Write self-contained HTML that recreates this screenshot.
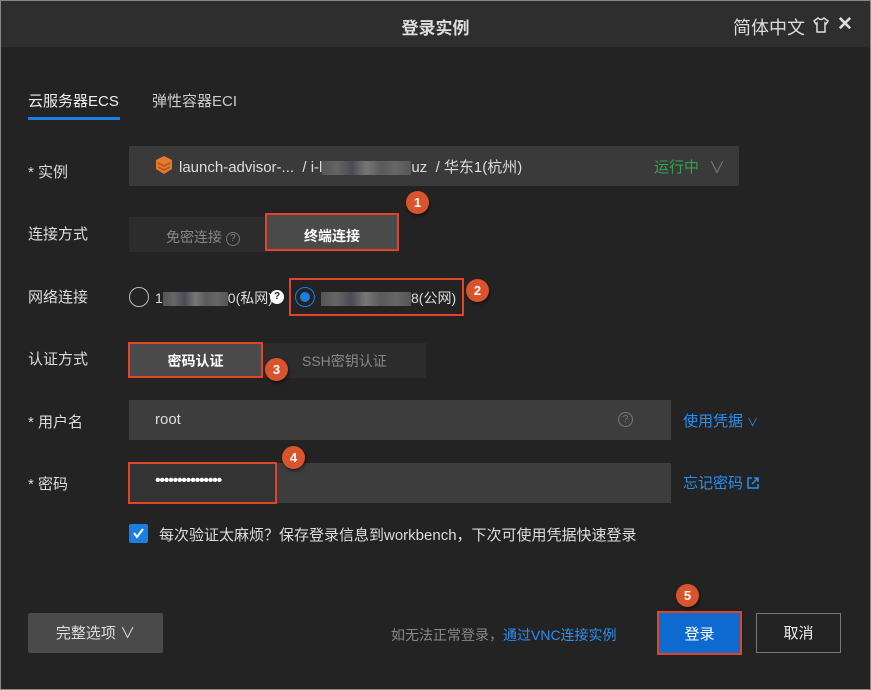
<!DOCTYPE html><html><head><meta charset="utf-8"><style>
*{box-sizing:border-box;margin:0;padding:0}
body{width:871px;height:690px;background:#232323;font-family:"Liberation Sans","Noto Sans CJK SC",sans-serif;color:#ddd;position:relative;overflow:hidden;font-size:15px}
.a{position:absolute;white-space:nowrap}
.frame{position:absolute;left:0;top:0;width:871px;height:690px;border:1px solid #888;pointer-events:none}
.hdr{position:absolute;left:0;top:0;width:871px;height:47px;background:#2e2e2e}
.lbl{color:#ddd;font-size:15px}
.red{border:2px solid #e0452a}
.badge{position:absolute;width:23px;height:23px;border-radius:50%;background:#d9542c;color:#fff;font-weight:bold;font-size:13px;text-align:center;line-height:23px;box-shadow:1px 2px 3px rgba(0,0,0,.5)}
.blur{display:inline-block;height:14px;background:linear-gradient(90deg,#555,#666,#4a4a55,#777,#5a5a5a,#666,#555);vertical-align:middle}
</style></head><body>
<div class="hdr"></div>
<div class="a" style="left:0;width:871px;top:14px;text-align:center;font-weight:bold;font-size:17px;color:#ddd">登录实例</div>
<div class="a" style="left:733px;top:14px;font-size:18px;color:#ddd">简体中文</div>
<svg class="a" style="left:812px;top:16px" width="18" height="18" viewBox="0 0 18 18"><path d="M6 2 L2 5 L4 8 L5 7 L5 16 L13 16 L13 7 L14 8 L16 5 L12 2 Q9 5 6 2Z" fill="none" stroke="#ddd" stroke-width="1.5"/></svg>
<div class="a" style="left:837px;top:13px;font-size:19px;font-weight:bold;color:#ddd">✕</div>

<div class="a" style="left:28px;top:90px;font-size:15px;color:#eee">云服务器ECS</div>
<div class="a" style="left:28px;top:117px;width:92px;height:3px;background:#1a7fe0"></div>
<div class="a" style="left:152px;top:90px;font-size:15px;color:#ccc">弹性容器ECI</div>

<div class="a lbl" style="left:28px;top:161px">* 实例</div>
<div class="a" style="left:129px;top:146px;width:610px;height:40px;background:#3a3a3a;border-radius:2px"></div>
<svg class="a" style="left:155px;top:155px" width="18" height="20" viewBox="0 0 18 20"><path d="M9 1 L17 5 L17 14 L9 19 L1 14 L1 5Z" fill="#e8782a"/><path d="M3 8 L9 11 L15 8 M3 12 L9 15 L15 12" stroke="#b5501a" stroke-width="1.5" fill="none"/></svg>
<div class="a" style="left:179px;top:156px;font-size:15px;color:#ddd">launch-advisor-...&nbsp; / i-l<span class="blur" style="width:89px"></span>uz&nbsp; / 华东1(杭州)</div>
<div class="a" style="left:654px;top:156px;color:#2da44e;font-size:15px">运行中</div>
<div class="a" style="left:709px;top:154px;color:#777;font-size:16px">∨</div>

<div class="a lbl" style="left:28px;top:223px">连接方式</div>
<div class="a" style="left:129px;top:217px;width:270px;height:35px;background:#2c2c2c"></div>
<div class="a" style="left:166px;top:227px;color:#888;font-size:14px">免密连接 <span style="display:inline-block;width:14px;height:14px;border:1px solid #777;border-radius:50%;font-size:10px;text-align:center;line-height:12px;vertical-align:1px">?</span></div>
<div class="a red" style="left:265px;top:213px;width:134px;height:38px;background:#4a4a4a"></div>
<div class="a" style="left:265px;top:226px;width:134px;text-align:center;font-weight:bold;color:#fff;font-size:14px">终端连接</div>
<div class="badge" style="left:406px;top:191px">1</div>

<div class="a lbl" style="left:28px;top:286px">网络连接</div>
<div class="a" style="left:129px;top:287px;width:20px;height:20px;border:1px solid #bbb;border-radius:50%"></div>
<div class="a" style="left:155px;top:288px;color:#ddd;font-size:14px">1<span class="blur" style="width:65px"></span>0(私网)</div>
<div class="a" style="left:270px;top:290px;width:14px;height:14px;border-radius:50%;background:#fff;color:#222;font-size:10px;font-weight:bold;text-align:center;line-height:14px">?</div>
<div class="a red" style="left:289px;top:278px;width:175px;height:38px"></div>
<div class="a" style="left:295px;top:287px;width:20px;height:20px;border:1px solid #1a7fe0;border-radius:50%"></div>
<div class="a" style="left:300px;top:292px;width:10px;height:10px;background:#1a7fe0;border-radius:50%"></div>
<div class="a" style="left:321px;top:288px;color:#ddd;font-size:14px"><span class="blur" style="width:90px"></span>8(公网)</div>
<div class="badge" style="left:466px;top:279px">2</div>

<div class="a lbl" style="left:28px;top:348px">认证方式</div>
<div class="a" style="left:129px;top:343px;width:297px;height:35px;background:#2c2c2c"></div>
<div class="a" style="left:302px;top:351px;color:#888;font-size:14px">SSH密钥认证</div>
<div class="a red" style="left:128px;top:342px;width:135px;height:36px;background:#4a4a4a"></div>
<div class="a" style="left:128px;top:351px;width:135px;text-align:center;font-weight:bold;color:#fff;font-size:14px">密码认证</div>
<div class="badge" style="left:265px;top:358px">3</div>

<div class="a lbl" style="left:28px;top:411px">* 用户名</div>
<div class="a" style="left:129px;top:400px;width:542px;height:40px;background:#3d3d3d"></div>
<div class="a" style="left:155px;top:411px;color:#ddd;font-size:15px">root</div>
<div class="a" style="left:618px;top:412px;width:15px;height:15px;border:1px solid #777;border-radius:50%;color:#777;font-size:10px;text-align:center;line-height:13px">?</div>
<div class="a" style="left:683px;top:410px;color:#2b8ff0;font-size:15px">使用凭据 <span style="font-size:11px">∨</span></div>

<div class="a lbl" style="left:28px;top:473px">* 密码</div>
<div class="a" style="left:129px;top:463px;width:542px;height:40px;background:#3d3d3d"></div>
<div class="a red" style="left:128px;top:462px;width:149px;height:42px;background:#333"></div>
<div class="a" style="left:155px;top:472px;color:#fff;font-size:16px;letter-spacing:-1.2px">•••••••••••••••</div>
<div class="badge" style="left:282px;top:446px">4</div>
<div class="a" style="left:683px;top:472px;color:#2b8ff0;font-size:15px">忘记密码 <svg width="12" height="12" viewBox="0 0 12 12" style="vertical-align:-1px"><path d="M5 1H1V11H11V7M7 1H11V5M11 1L5 7" stroke="#2b8ff0" stroke-width="1.5" fill="none"/></svg></div>

<div class="a" style="left:129px;top:524px;width:19px;height:19px;background:#1a7fe0;border-radius:2px"></div>
<svg class="a" style="left:131px;top:526px" width="15" height="15"><path d="M3 7 L6 11 L12 3" stroke="#fff" stroke-width="2" fill="none"/></svg>
<div class="a" style="left:159px;top:524px;color:#ddd;font-size:15px">每次验证太麻烦？保存登录信息到workbench，下次可使用凭据快速登录</div>

<div class="a" style="left:28px;top:613px;width:135px;height:40px;background:#4a4a4a;border-radius:2px;color:#ddd;font-size:15px;text-align:center;line-height:42px">完整选项 ∨</div>
<div class="a" style="left:391px;top:625px;color:#888;font-size:14px">如无法正常登录，<span style="color:#2b8ff0">通过VNC连接实例</span></div>
<div class="a red" style="left:657px;top:611px;width:85px;height:44px;background:#0f6ad0;color:#fff;font-size:15px;text-align:center;line-height:44px">登录</div>
<div class="badge" style="left:676px;top:584px">5</div>
<div class="a" style="left:756px;top:613px;width:85px;height:40px;border:1px solid #777;color:#eee;font-size:15px;text-align:center;line-height:40px">取消</div>
<div class="frame"></div>
</body></html>
